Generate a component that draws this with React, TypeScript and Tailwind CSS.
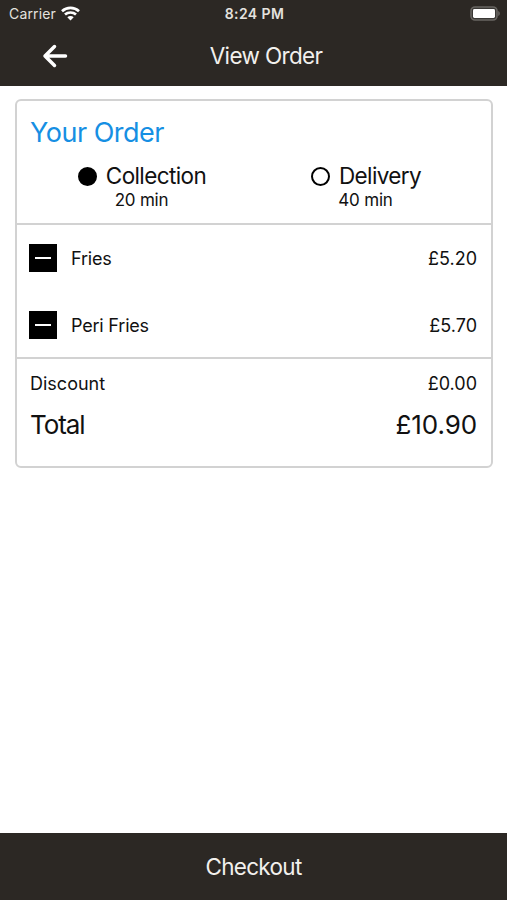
import { useState } from "react";
import clsx from "clsx";

const METHODS = [
  { id: "collection", label: "Collection", time: "20 min" },
  { id: "delivery", label: "Delivery", time: "40 min" },
];

const ITEMS = [
  { name: "Fries", price: 5.2 },
  { name: "Peri Fries", price: 5.7 },
];

const DISCOUNT = 0;

const formatPrice = (value: number) => `£${value.toFixed(2)}`;

function StatusBar() {
  return (
    <div className="h-7 grid grid-cols-3 items-center pl-[9px] pr-[7px] text-[#e4e2df]">
      <div className="flex items-center gap-[5px]">
        <span className="text-[14px] leading-none tracking-[0.15px]">Carrier</span>
        <svg className="-mt-0.5" width="19" height="15" viewBox="0 0 19 15" fill="none" stroke="white" strokeWidth="2.7">
          <path d="M1 5.2C5.8.8 13.2.8 18 5.2" />
          <path d="M4 8.6c3-2.8 8-2.8 11 0" />
          <path d="M9.5 14.4 6.3 11.2c1.8-1.7 4.6-1.7 6.4 0z" fill="white" stroke="none" />
        </svg>
      </div>
      <span className="text-center text-[14px] leading-none font-semibold tracking-[0.4px]">8:24 PM</span>
      <div className="flex items-center justify-end">
        <svg className="-mt-0.5" width="30" height="15" viewBox="0 0 30 15">
          <rect x="1" y="1" width="26" height="13" rx="4" fill="#3a3835" stroke="#686561" strokeWidth="1.6" />
          <rect x="3" y="3" width="22" height="9" rx="1.4" fill="white" />
          <path d="M28.2 5c2.2 1 2.2 4 0 5z" fill="#686561" />
        </svg>
      </div>
    </div>
  );
}

function Header() {
  return (
    <header className="h-[86px] shrink-0 bg-[#2c2824]">
      <StatusBar />
      <div className="h-14 grid grid-cols-[110px_1fr_85px] items-center">
        <button className="flex justify-center" aria-label="Back">
          <svg width="26" height="26" viewBox="0 0 26 26" fill="none" stroke="white" strokeWidth="3.5" strokeLinecap="round" strokeLinejoin="round">
            <path d="M23.5 13H3M12.5 3.5 3 13l9.5 9.5" />
          </svg>
        </button>
        <h1 className="text-center text-[22.5px] leading-none tracking-[-0.65px] text-[#f2f0ed]">View Order</h1>
      </div>
    </header>
  );
}

export default function App() {
  const [method, setMethod] = useState("collection");
  const total = ITEMS.reduce((sum, item) => sum + item.price, 0) - DISCOUNT;

  return (
    <div className="h-screen flex flex-col bg-white text-[#111] font-['Inter',sans-serif]">
      <Header />

      <main className="flex-1 pl-[15px] pr-3.5 pt-[13px]">
        <div className="h-[369px] rounded-md border-2 border-[#d2d2d2] divide-y-2 divide-[#d2d2d2]">
          <section className="h-[124px] pt-[18px]">
            <h2 className="pl-[13px] text-[27px] leading-7 tracking-[-0.5px] text-[#168fe3]">Your Order</h2>
            <div className="mt-[15px] grid grid-cols-[250px_198px]">
              {METHODS.map((m) => (
                <button key={m.id} onClick={() => setMethod(m.id)} className="flex flex-col items-center">
                  <span className="flex items-center gap-[9px]">
                    <span
                      className={clsx(
                        "size-[19px] rounded-full border-2 border-black",
                        method === m.id && "bg-black"
                      )}
                    />
                    <span className="text-[22.5px] leading-7 tracking-[-0.6px]">{m.label}</span>
                  </span>
                  <span className="pr-px text-[17px] leading-5 tracking-[-0.2px]">{m.time}</span>
                </button>
              ))}
            </div>
          </section>

          <section className="h-[134px]">
            {ITEMS.map((item) => (
              <div key={item.name} className="h-[67px] flex items-center pl-3 pr-3.5">
                <button className="mb-px size-7 bg-black flex items-center justify-center" aria-label="Remove">
                  <span className="w-4 h-0.5 bg-white" />
                </button>
                <span className="ml-3.5 text-[18px] tracking-[-0.2px]">{item.name}</span>
                <span className="ml-auto text-[18px]">{formatPrice(item.price)}</span>
              </div>
            ))}
          </section>

          <section className="pl-[13px] pr-3.5 pt-[11px]">
            <div className="flex justify-between text-[18px] leading-7">
              <span>Discount</span>
              <span>{formatPrice(DISCOUNT)}</span>
            </div>
            <div className="mt-[11px] flex justify-between text-[26px] leading-8">
              <span className="tracking-[-1.1px]">Total</span>
              <span className="tracking-[-0.1px]">{formatPrice(total)}</span>
            </div>
          </section>
        </div>
      </main>

      <button className="h-[67px] shrink-0 bg-[#2c2824] text-[22.5px] text-[#f2f0ed] tracking-[-0.7px]">
        Checkout
      </button>
    </div>
  );
}
